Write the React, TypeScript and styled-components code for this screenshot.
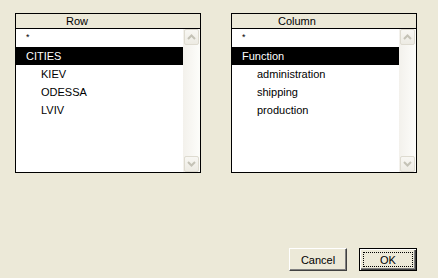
import React from "react";
import styled, { createGlobalStyle } from "styled-components";

const GlobalStyle = createGlobalStyle`
  html, body {
    margin: 0;
    padding: 0;
    background: #ece9d8;
  }
  body {
    font-family: "Liberation Sans", Arial, sans-serif;
    font-size: 11px;
    color: #000;
  }
`;

const Dialog = styled.div`
  width: 438px;
  height: 278px;
  box-sizing: border-box;
  padding: 13px 0 0 15px;
  background: #ece9d8;
`;

const Content = styled.div`
  width: 402px;
  display: flex;
  flex-direction: column;
`;

const Panels = styled.div`
  display: flex;
  gap: 30px;
`;

const Panel = styled.div`
  width: 186px;
  height: 160px;
  box-sizing: border-box;
  border: 1px solid #000;
  display: flex;
  flex-direction: column;
  background: #fff;
`;

const Header = styled.div<{ $indent: number }>`
  height: 14px;
  line-height: 14px;
  border-bottom: 1px solid #000;
  background: #ece9d8;
  padding-left: ${(p) => p.$indent}px;
  font-size: 11px;
`;

const Body = styled.div`
  flex: 1;
  display: flex;
  min-height: 0;
`;

const List = styled.div`
  flex: 1;
  display: flex;
  flex-direction: column;
`;

const Item = styled.div<{ $level: number; $selected?: boolean }>`
  height: 18px;
  line-height: 18px;
  padding-left: ${(p) => 10 + p.$level * 15}px;
  background: ${(p) => (p.$selected ? "#000" : "transparent")};
  color: ${(p) => (p.$selected ? "#fff" : "#000")};
  font-size: 11px;
  white-space: nowrap;
`;

const Star = styled.span`
  font-size: 9px;
  position: relative;
  top: -2px;
`;

const ScrollBar = styled.div`
  width: 17px;
  display: flex;
  flex-direction: column;
  justify-content: space-between;
  background: linear-gradient(to right, #f3f1ec, #fdfdfa);
`;

const ScrollButton = styled.div`
  width: 15px;
  height: 16px;
  margin: 0 0 0 1px;
  box-sizing: border-box;
  border: 1px solid #dedbd0;
  border-radius: 2px;
  background: linear-gradient(to bottom, #f8f7f3, #edebe3);
  display: flex;
  align-items: center;
  justify-content: center;
`;

const Buttons = styled.div`
  margin-top: 75px;
  display: flex;
  justify-content: flex-end;
  gap: 12px;
`;

const Button = styled.button<{ $default?: boolean }>`
  width: 58px;
  height: 23px;
  box-sizing: border-box;
  padding: 0;
  font-family: "Liberation Sans", Arial, sans-serif;
  font-size: 11px;
  color: #000;
  background: #ece9d8;
  border: 1px solid ${(p) => (p.$default ? "#000" : "transparent")};
  box-shadow: inset 1px 1px 0 #fff, inset -1px -1px 0 #404040,
    inset -2px -2px 0 #808080;
  ${(p) => (p.$default ? "" : "border-left-color: #fff; border-top-color: #fff; border-right-color: #404040; border-bottom-color: #404040; box-shadow: inset -1px -1px 0 #808080;")}
  display: flex;
  align-items: center;
  justify-content: center;
`;

const Focus = styled.span`
  display: flex;
  align-items: center;
  justify-content: center;
  width: 48px;
  height: 13px;
  border: 1px dotted #000;
`;

const Chevron: React.FC<{ up?: boolean }> = ({ up }) => (
  <svg width="9" height="6" viewBox="0 0 9 6">
    <path
      d={up ? "M1 5 L4.5 1.5 L8 5" : "M1 1 L4.5 4.5 L8 1"}
      stroke="#c4c2b6"
      strokeWidth="2"
      fill="none"
    />
  </svg>
);

interface Entry {
  label: string;
  level: number;
  selected?: boolean;
}

const ListPanel: React.FC<{ title: string; indent: number; items: Entry[] }> = ({
  title,
  indent,
  items,
}) => (
  <Panel>
    <Header $indent={indent}>{title}</Header>
    <Body>
      <List>
        <Item $level={0}>
          <Star>*</Star>
        </Item>
        {items.map((it) => (
          <Item key={it.label} $level={it.level} $selected={it.selected}>
            {it.label}
          </Item>
        ))}
      </List>
      <ScrollBar>
        <ScrollButton>
          <Chevron up />
        </ScrollButton>
        <ScrollButton>
          <Chevron />
        </ScrollButton>
      </ScrollBar>
    </Body>
  </Panel>
);

const rows: Entry[] = [
  { label: "CITIES", level: 0, selected: true },
  { label: "KIEV", level: 1 },
  { label: "ODESSA", level: 1 },
  { label: "LVIV", level: 1 },
];

const columns: Entry[] = [
  { label: "Function", level: 0, selected: true },
  { label: "administration", level: 1 },
  { label: "shipping", level: 1 },
  { label: "production", level: 1 },
];

const App: React.FC = () => (
  <>
    <GlobalStyle />
    <Dialog>
      <Content>
        <Panels>
          <ListPanel title="Row" indent={50} items={rows} />
          <ListPanel title="Column" indent={46} items={columns} />
        </Panels>
        <Buttons>
          <Button>Cancel</Button>
          <Button $default>
            <Focus>OK</Focus>
          </Button>
        </Buttons>
      </Content>
    </Dialog>
  </>
);

export default App;
